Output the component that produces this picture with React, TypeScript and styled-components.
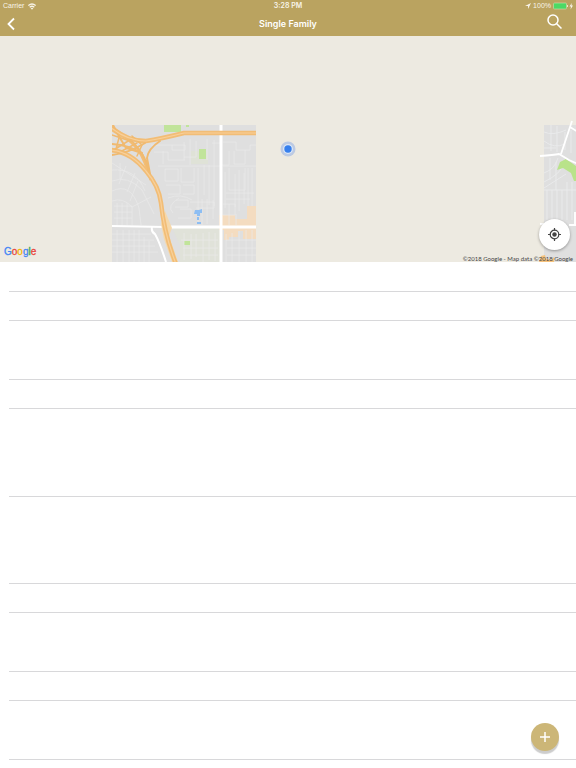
import React from 'react';
import styled, { createGlobalStyle } from 'styled-components';

const GlobalStyle = createGlobalStyle`
  *, *::before, *::after { box-sizing: border-box; }
  body { margin: 0; background: #fff; font-family: Inter, "Liberation Sans", sans-serif; }
  button { border: 0; padding: 0; background: none; color: inherit; font: inherit; cursor: pointer; }
`;

const Screen = styled.div`
  display: flex;
  flex-direction: column;
  height: 100vh;
  overflow: hidden;
`;

const Header = styled.header`
  flex: none;
  background: #baa360;
  color: #fff;
`;

const StatusBar = styled.div`
  display: grid;
  grid-template-columns: 1fr auto 1fr;
  align-items: center;
  height: 12px;
  padding: 0 3px;
  font-family: "Liberation Sans", sans-serif;
  font-size: 7px;
  line-height: 12px;
  color: #f8f4e9;
`;

const StatusGroup = styled.div<{ $end?: boolean }>`
  display: flex;
  align-items: center;
  justify-content: ${({ $end }) => ($end ? 'flex-end' : 'flex-start')};
  gap: ${({ $end }) => ($end ? '2px' : '4px')};
`;

const Clock = styled.time`
  font-family: Inter, sans-serif;
  font-weight: 600;
`;

const NavBar = styled.div`
  display: grid;
  grid-template-columns: 1fr auto 1fr;
  align-items: center;
  height: 24px;
  padding: 0 5px;
`;

const NavButton = styled.button<{ $end?: boolean }>`
  display: flex;
  justify-self: ${({ $end }) => ($end ? 'end' : 'start')};
  align-items: ${({ $end }) => ($end ? 'flex-start' : 'center')};
  height: 20px;
  padding-right: ${({ $end }) => ($end ? '8px' : '0')};
`;

const Title = styled.h1`
  margin: 0;
  font-size: 9px;
  font-weight: 600;
  line-height: 24px;
`;

const MapPanel = styled.section`
  position: relative;
  flex: none;
  height: 226px;
  overflow: hidden;
  background: #edeae1;
`;

const MapDrawing = styled.svg`
  display: block;
  width: 100%;
  height: 100%;
`;

const LocateButton = styled.button`
  position: absolute;
  right: 6px;
  bottom: 12px;
  display: grid;
  place-items: center;
  width: 31px;
  height: 31px;
  border-radius: 50%;
  background: #fff;
  color: #444;
  box-shadow: 0 1px 3px rgba(0, 0, 0, 0.35);
`;

const Brand = styled.a`
  position: absolute;
  left: 4px;
  bottom: 2px;
  font-family: "Liberation Sans", sans-serif;
  font-size: 10px;
  font-weight: 400;
  line-height: 16px;
  -webkit-text-stroke: 0.3px;
  text-decoration: none;
`;

const Letter = styled.span<{ $color: string }>`
  color: ${({ $color }) => $color};
`;

const Attribution = styled.small`
  position: absolute;
  right: 3px;
  bottom: 0;
  font-family: Lato, sans-serif;
  font-size: 6px;
  line-height: 7px;
  color: #444;
`;

const List = styled.ul`
  flex: 1;
  min-height: 0;
  margin: 0;
  padding: 0 0 0 9px;
  overflow: hidden;
  list-style: none;
`;

const Row = styled.li<{ $height: number }>`
  height: ${({ $height }) => $height}px;
  border-bottom: 1px solid #d8d8da;
`;

const AddButton = styled.button`
  position: fixed;
  right: 17px;
  bottom: 17px;
  display: grid;
  place-items: center;
  width: 28px;
  height: 28px;
  border-radius: 50%;
  background: #ccb677;
  color: #fff;
  box-shadow: 0 3px 1px rgba(0, 0, 0, 0.2);
`;

const rows = [30, 29, 59, 29, 88, 87, 29, 59, 29, 59];

const brandLetters = [
  ['G', '#4285f4'],
  ['o', '#e8453c'],
  ['o', '#f4b400'],
  ['g', '#4285f4'],
  ['l', '#34a853'],
  ['e', '#e8453c'],
];

function WifiIcon() {
  return (
    <svg width="8" height="7" viewBox="0 0 8 7" fill="none" stroke="currentColor" strokeWidth="1.3" aria-hidden="true">
      <path d="M.4 2.600Q4-.5 7.600 2.600M1.700 4.200Q4 2.300 6.300 4.200" />
      <path d="M4 6.700 2.700 5.300Q4 4.300 5.300 5.300Z" fill="currentColor" stroke="none" />
    </svg>
  );
}

function StreetMap() {
  return (
    <MapDrawing viewBox="0 36 576 226" preserveAspectRatio="xMidYMid slice" role="img" aria-label="Street map">
      <defs>
        <clipPath id="tile"><rect x="112" y="125" width="144" height="137" /></clipPath>
        <clipPath id="east"><rect x="544" y="125" width="32" height="137" /></clipPath>
      </defs>
      <g clipPath="url(#tile)" fill="none">
        <rect x="112" y="125" width="144" height="137" fill="#dfdfdf" />
        <path d="M180 228H220V262H180ZM172 228H180V245Z" fill="#e0e2d9" />
        <path d="M191 151H208V164H191Z" fill="#dfe2d7" />
        <path d="M164 125H181V132H164ZM186 125H189V127H186ZM199 149H206V159H199ZM184 241H190V245H184Z" fill="#c1e49a" />
        <path d="M219 215H235V219H247V206H256V239H243V231H238V237H229V240H224V230H219Z" fill="#f4dcc0" />
        <g stroke="#e9e9e9" strokeWidth=".7">
          <path d="M112 181Q128 175 142 190L154 214M112 170Q136 168 145 191M112 163L146 185M120 163V179M126 166L119 184M135 173L127 192M138 181L130 201M112 191Q131 182 139 208L141 225M112 201Q123 197 132 207L151 197M132 207V225" />
          <path d="M114 206H132M114 212H132M114 218H132M117 203V225M122 203V225M127 203V225M112 234H151M112 240H154M112 246H155M112 252H158M117 230V262M123 230V262M129 230V262M134 230V262M139 230V262M144 237V262M149 241V262" />
          <path d="M151 145H185V150H172V145M154 152H168V160H185M158 166H220M165 169H178V181H165ZM181 168V182H194V168M166 185H180V194H168M183 185H194V194H183M198 168V224M204 165V195M209 165V205M214 140V206M184 142V160M190 139V165M196 141V157H184M207 139V160M212 143H220M163 151V164" />
          <path d="M223 142H236V150H250V145H256M229 151V165H222M234 151V164H245V150M223 166H256M229 168V190H245V168M225 172V208M235 174V207M239 170V211M244 173V204M248 168V206M252 168V206M226 193H254M226 199H250" />
          <path d="M176 200H188V207H175M180 209H191V218H178M190 202H214V208H196M202 199V225M207 199V224M213 200V219M223 204H235V215H223M229 204V225M236 214V225M184 233V260M191 234V259M196 234V257M203 233V262M209 232V260M215 233V261M181 240H218M183 248H218M183 255H218M226 234V262M232 233V262M239 231V262M246 230V262M252 230V262M226 240H256M227 248H256M227 255H256" />
          <path d="M168 198Q181 193 192 200M173 213Q166 206 179 198" />
        </g>
        <g stroke="#fff" strokeLinejoin="round">
          <path d="M221 125V262M165 227H256" strokeWidth="3" />
          <path d="M112 226L165 227" strokeWidth="2" />
          <path d="M152 227Q151 232 155 234Q160 243 166 262" strokeWidth="2" />
        </g>
        <path d="M161 224L165 211L172 228L169 236L178 262H172L164 239Z" fill="#f5d8ab" />
        <g stroke="#f2bd76">
          <path d="M111 150Q131 152 146 171Q159 186 161 203Q164 233 176 264" strokeWidth="4.500" />
          <path d="M110 127Q127 141 146 141Q160 139 184 133H256" strokeWidth="4.500" />
          <path d="M111 127Q126 136 138 149Q145 160 151 180" strokeWidth="3" />
        </g>
        <g stroke="#f0ba70" strokeLinecap="round">
          <path d="M113 125Q119 137 126 148L142 153M112 155Q129 153 145 143M112 144Q130 145 142 154Q146 159 149 173M160 141Q148 149 147 158L150 174" strokeWidth="2" />
          <path d="M112 135L133 142L143 155M112 151L133 138M118 153L137 143M132 136L142 145L137 156M120 134L116 149" strokeWidth="1.500" />
        </g>
        <path d="M111 150Q131 152 146 171Q159 186 161 203Q164 233 176 264M110 127Q127 141 146 141Q160 139 184 133H256" stroke="#f8d09a" strokeWidth="1.200" />
        <path d="M195 210H199L202 209V213H200V216H197V214H194ZM197 217H199V220H197ZM197 222H201V224H197Z" fill="#8dbef3" />
      </g>
      <g clipPath="url(#east)">
        <path d="M544 125H576V262H544Z" fill="#dfdfdf" />
        <g stroke="#ebecee" fill="none" strokeWidth=".8">
          <path d="M544 132Q553 136 566 130M544 141Q554 149 565 144M544 148H556M551 125V151M557 126V152M565 132V150M544 173Q555 169 558 158M544 182Q562 173 563 164M544 188L566 174M550 158V180M556 162V190M544 190H576M547 190V220M552 190V220M557 190V220M562 190V220M567 182V220M572 182V220M571 130V153" />
        </g>
        <path d="M557 170L560 162L566 159L576 166V181L574 181L571 173L563 168Z" fill="#b9e38a" />
      </g>
      <g fill="none" stroke="#fff" strokeWidth="1.800">
        <path d="M572 121L561 154M570 127L578 132M540 156Q554 155 559 154L569 160L578 164M540 224H545M569 225H576M575 212V226" />
      </g>
      <path d="M539 262L541 256L545 255L546 259L551 260L554 257V262Z" fill="#f6c27c" />
      <circle cx="288" cy="149" r="7.500" fill="#bccae3" />
      <circle cx="288" cy="149" r="5" fill="#dce7f6" />
      <circle cx="288" cy="149" r="3.700" fill="#3780ed" />
    </MapDrawing>
  );
}

export default function App() {
  return (
    <>
      <GlobalStyle />
      <Screen>
        <Header>
          <StatusBar>
            <StatusGroup><span>Carrier</span><WifiIcon /></StatusGroup>
            <Clock>3:28 PM</Clock>
            <StatusGroup $end>
              <svg width="6" height="6" viewBox="0 0 6 6" aria-hidden="true"><path d="M0 3 6 0 3 6V3Z" fill="currentColor" /></svg>
              <span>100%</span>
              <svg width="20" height="8" viewBox="0 0 20 8" aria-label="Battery charging">
                <rect x=".5" y="1" width="13" height="6" rx="1" fill="#4cd964" stroke="#d3dfae" strokeWidth=".6" />
                <path d="M14.500 3V5" stroke="#eee5ca" />
                <path d="M18.700 1 16.500 4.500H18L17.500 7.500 20 3.500H18.500Z" fill="currentColor" />
              </svg>
            </StatusGroup>
          </StatusBar>
          <NavBar>
            <NavButton aria-label="Back">
              <svg width="12" height="14" viewBox="0 0 12 14" fill="none" stroke="currentColor" strokeWidth="1.800"><path d="M9 1.500 3.500 7l5.500 5.500" /></svg>
            </NavButton>
            <Title>Single Family</Title>
            <NavButton $end aria-label="Search">
              <svg width="18" height="16" viewBox="0 0 18 16" fill="none" stroke="currentColor" strokeWidth="1.500"><circle cx="8" cy="6" r="5" /><path d="m11.500 9.500 5 5" /></svg>
            </NavButton>
          </NavBar>
        </Header>
        <MapPanel aria-label="Map">
          <StreetMap />
          <Brand href="#google" aria-label="Google">
            {brandLetters.map(([letter, color], index) => <Letter key={index} $color={color}>{letter}</Letter>)}
          </Brand>
          <Attribution>©2018 Google - Map data ©2018 Google</Attribution>
          <LocateButton aria-label="My location">
            <svg width="13" height="13" viewBox="0 0 13 13" fill="none" stroke="currentColor" strokeWidth="1.200"><circle cx="6.500" cy="6.500" r="4.300" /><path d="M6.500 0v2.500M6.500 10.500V13M0 6.500h2.500M10.500 6.500H13" /><circle cx="6.500" cy="6.500" r="2.200" fill="currentColor" stroke="none" /></svg>
          </LocateButton>
        </MapPanel>
        <List>{rows.map((height, index) => <Row key={index} $height={height} />)}</List>
        <AddButton aria-label="Add">
          <svg width="12" height="12" viewBox="0 0 12 12" fill="none" stroke="currentColor" strokeWidth="1.500"><path d="M6 1v10M1 6h10" /></svg>
        </AddButton>
      </Screen>
    </>
  );
}
